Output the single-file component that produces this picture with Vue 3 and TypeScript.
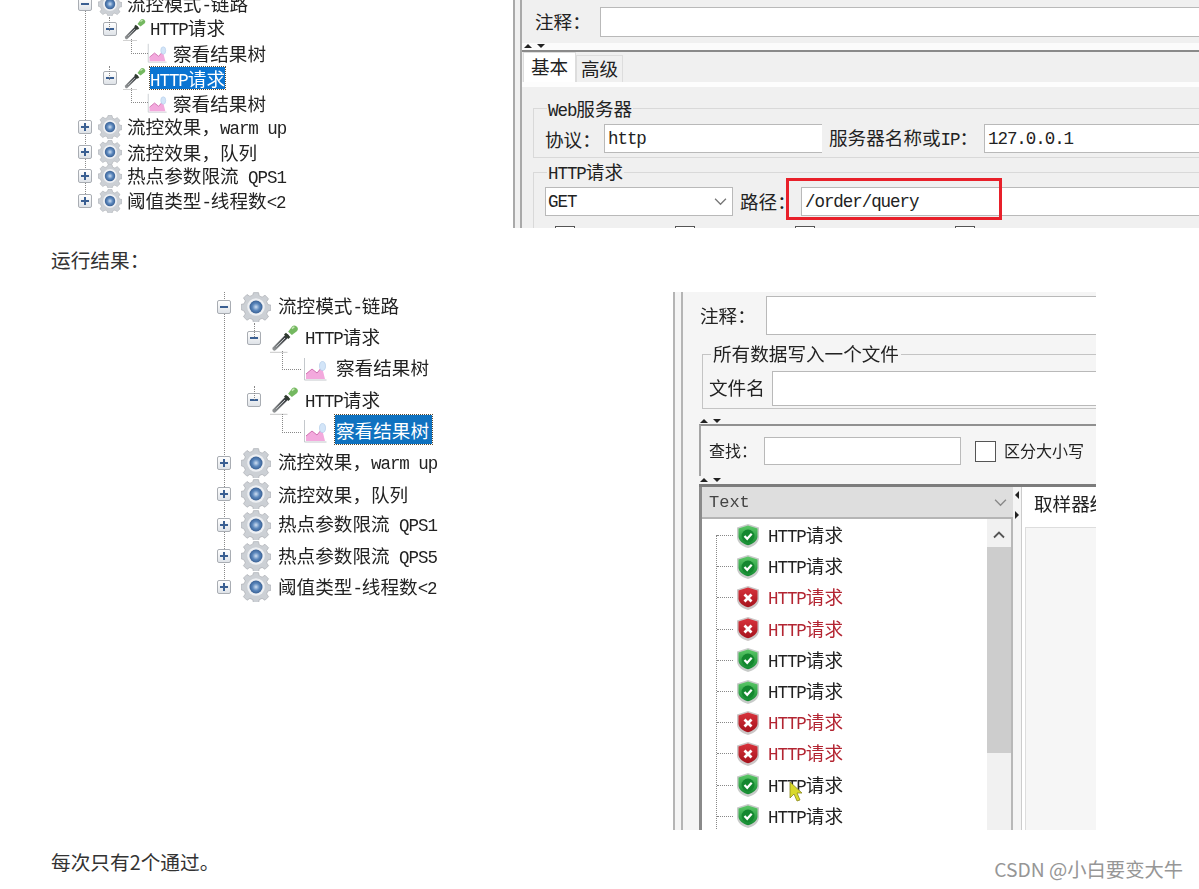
<script setup lang="ts">
interface Node { level: number; kind: 'gear' | 'pipette' | 'chart'; text: string; open?: boolean; sel?: boolean }
interface Seg { t: string; lat: boolean }

const seg = (s: string): Seg[] =>
  s.split(/([\x20-\x7e]+)/).filter(Boolean).map((t) => ({ t, lat: /^[\x20-\x7e]+$/.test(t) }))

const topTree: Node[] = [
  { level: 0, kind: 'gear', text: '流控模式-链路', open: true },
  { level: 1, kind: 'pipette', text: 'HTTP请求', open: true },
  { level: 2, kind: 'chart', text: '察看结果树' },
  { level: 1, kind: 'pipette', text: 'HTTP请求', open: true, sel: true },
  { level: 2, kind: 'chart', text: '察看结果树' },
  { level: 0, kind: 'gear', text: '流控效果\uFF0Cwarm up' },
  { level: 0, kind: 'gear', text: '流控效果\uFF0C队列' },
  { level: 0, kind: 'gear', text: '热点参数限流 QPS1' },
  { level: 0, kind: 'gear', text: '阈值类型-线程数<2' },
]
const bottomTree: Node[] = [
  { level: 0, kind: 'gear', text: '流控模式-链路', open: true },
  { level: 1, kind: 'pipette', text: 'HTTP请求', open: true },
  { level: 2, kind: 'chart', text: '察看结果树' },
  { level: 1, kind: 'pipette', text: 'HTTP请求', open: true },
  { level: 2, kind: 'chart', text: '察看结果树', sel: true },
  { level: 0, kind: 'gear', text: '流控效果\uFF0Cwarm up' },
  { level: 0, kind: 'gear', text: '流控效果\uFF0C队列' },
  { level: 0, kind: 'gear', text: '热点参数限流 QPS1' },
  { level: 0, kind: 'gear', text: '热点参数限流 QPS5' },
  { level: 0, kind: 'gear', text: '阈值类型-线程数<2' },
]
const trees = [
  { cls: 'tree-sm', nodes: topTree },
  { cls: 'tree-lg', nodes: bottomTree },
]
const results: boolean[] = [true, true, false, false, true, true, false, false, true, true]
</script>

<template>
  <div class="page">
    <svg class="defs" width="0" height="0" aria-hidden="true">
      <defs>
        <radialGradient id="hub" cx="0.5" cy="0.5" r="0.6">
          <stop offset="0" stop-color="#cfdff2" />
          <stop offset="0.45" stop-color="#5c88bd" />
          <stop offset="1" stop-color="#2a4f82" />
        </radialGradient>
        <linearGradient id="shG" x1="0" y1="0" x2="0" y2="1">
          <stop offset="0" stop-color="#5cc868" />
          <stop offset="1" stop-color="#128a30" />
        </linearGradient>
        <linearGradient id="shR" x1="0" y1="0" x2="0" y2="1">
          <stop offset="0" stop-color="#d8333c" />
          <stop offset="1" stop-color="#a5121c" />
        </linearGradient>
        <linearGradient id="stem" x1="0" y1="1" x2="1" y2="0">
          <stop offset="0" stop-color="#8d9092" />
          <stop offset="1" stop-color="#2f3336" />
        </linearGradient>
        <symbol id="gear" viewBox="0 0 24 24">
          <path fill="#ccd0d5" stroke="#adb0b5" stroke-width=".6" d="M10 .5h4l.6 2.600 2.300 1 2.300-1.500 2.800 2.800-1.500 2.300 1 2.300 2.500.6v4l-2.500.6-1 2.300 1.500 2.300-2.800 2.800-2.300-1.500-2.300 1-.6 2.600h-4l-.6-2.600-2.300-1-2.300 1.500-2.800-2.800 1.500-2.300-1-2.300L0 14v-4l2.500-.6 1-2.300L2 4.800l2.800-2.800 2.300 1.500 2.300-1z" />
          <circle cx="12" cy="12" r="7" fill="#eef0f3" />
          <circle cx="12" cy="12" r="5.200" fill="url(#hub)" />
        </symbol>
        <symbol id="pipette" viewBox="0 0 24 24">
          <path d="M3.500 20.500 L13.500 10.500" stroke="url(#stem)" stroke-width="3.200" stroke-linecap="round" />
          <path d="M5 19 L12 12" stroke="#c4c8ca" stroke-width=".8" />
          <path d="M12 8.500l3.500 3.500" stroke="#2f3b2f" stroke-width="2.200" />
          <path d="M14.500 7l3-4a2.600 2.600 0 0 1 4 3.500l-4 3z" fill="#74b860" />
          <path d="M17.500 4.500l2-1.500" stroke="#cbe8ba" stroke-width="1.200" />
          <path d="M0 23.500h14" stroke="#d2d2d2" stroke-width="1" />
        </symbol>
        <symbol id="chart" viewBox="0 0 24 24">
          <path d="M1.500 1v22h22" fill="none" stroke="#c4c8cc" stroke-width="1" />
          <path d="M3 22 L3 17 L9 12 L14 16 L19 10 L22 22z" fill="#f3a9dd" />
          <path d="M3 17 L9 12 L14 16 L19 10" fill="none" stroke="#cf6fb0" stroke-width="1" />
          <ellipse cx="19.500" cy="9" rx="3" ry="4.500" fill="#d3e5f8" stroke="#aac6e6" stroke-width=".6" />
        </symbol>
        <symbol id="okshield" viewBox="0 0 24 24">
          <path d="M12 0l11 3.500v9.500c0 6-5.500 9.500-11 11C6.500 22.500 1 19 1 13V3.500z" fill="#c8cbc9" />
          <path d="M12 1.500l9.500 3v8c0 4.500-4.700 7.300-9.500 8.800-4.800-1.500-9.500-4.300-9.500-8.800v-8z" fill="url(#shG)" />
          <circle cx="12" cy="12" r="6.500" fill="#14872f" />
          <path d="M8.500 12l2.700 2.800 4.500-5" fill="none" stroke="#fff" stroke-width="2.200" />
        </symbol>
        <symbol id="badshield" viewBox="0 0 24 24">
          <path d="M12 0l11 3.500v9.500c0 6-5.500 9.500-11 11C6.500 22.500 1 19 1 13V3.500z" fill="#cbc6c6" />
          <path d="M12 1.500l9.500 3v8c0 4.500-4.700 7.300-9.500 8.800-4.800-1.500-9.500-4.300-9.500-8.800v-8z" fill="url(#shR)" />
          <path d="M8.500 8.500l7 7m0-7l-7 7" fill="none" stroke="#fff" stroke-width="2.800" />
        </symbol>
      </defs>
    </svg>

    <template v-for="(tree, ti) in trees" :key="tree.cls">
      <div :class="ti === 0 ? 'shot shot-top' : 'shot shot-bottom'">
        <div class="tree" :class="tree.cls">
          <div v-for="(n, i) in tree.nodes" :key="i" class="row" :class="'lv' + n.level">
            <span v-if="n.level < 2" class="exp" :class="{ open: n.open }"></span>
            <svg class="ic" :class="'ic-' + n.kind"><use :href="'#' + n.kind" /></svg>
            <span class="label" :class="{ sel: n.sel }"><span v-for="(s, j) in seg(n.text)" :key="j" :class="{ lat: s.lat }">{{ s.t }}</span></span>
          </div>
        </div>

        <div v-if="ti === 0" class="jm jm-top">
          <div class="jm-inner">
            <div class="note">
              <span class="cn">注释&#xFF1A;</span>
              <div class="field grow"></div>
            </div>
            <div class="split"><i class="up"></i><i class="down"></i></div>
            <div class="tabs">
              <span class="tab on">基本</span>
              <span class="tab">高级</span>
            </div>
            <div class="tabbody">
              <fieldset class="group g1">
                <legend><span class="lat">Web</span>服务器</legend>
                <div class="frow">
                  <span class="proto-l">协议&#xFF1A;</span>
                  <div class="field f-proto"><span class="lat">http</span></div>
                  <span class="srv">服务器名称或<span class="lat">IP</span>&#xFF1A;</span>
                  <div class="field grow"><span class="lat">127.0.0.1</span></div>
                </div>
              </fieldset>
              <fieldset class="group g2">
                <legend><span class="lat">HTTP</span>请求</legend>
                <div class="frow">
                  <div class="field f-get">
                    <span class="lat">GET</span>
                    <svg class="chev" viewBox="0 0 12 8"><path d="M1 1.500l5 5 5-5" fill="none" stroke="#777" stroke-width="1.200" /></svg>
                  </div>
                  <span class="path">路径&#xFF1A;</span>
                  <div class="field grow path-field">
                    <span class="lat">/order/query</span>
                    <span class="redbox"></span>
                  </div>
                </div>
                <div class="checks"><i></i><i></i><i></i><i></i></div>
              </fieldset>
            </div>
          </div>
        </div>

        <div v-else class="jm jm-bottom">
          <div class="b-inner">
            <div class="b-note">
              <span>注释&#xFF1A;</span>
              <div class="field grow"></div>
            </div>
            <fieldset class="b-group">
              <legend>所有数据写入一个文件</legend>
              <div class="b-file">
                <span>文件名</span>
                <div class="field grow"></div>
              </div>
            </fieldset>
            <div class="split b-split"><i class="up"></i><i class="down"></i></div>
            <div class="b-search">
              <span>查找&#xFF1A;</span>
              <div class="field f-find"></div>
              <i class="cb"></i>
              <span class="case">区分大小写</span>
            </div>
            <div class="split b-split2"><i class="up"></i><i class="down"></i></div>
            <div class="b-results">
              <div class="list">
                <div class="combo">
                  <span class="lat combo-t">Text</span>
                  <svg class="chev" viewBox="0 0 12 8"><path d="M1 1.500l5 5 5-5" fill="none" stroke="#888" stroke-width="1.200" /></svg>
                </div>
                <div class="items">
                  <div class="rows">
                    <div v-for="(ok, i) in results" :key="i" class="res" :class="{ bad: !ok }">
                      <svg class="shield"><use :href="ok ? '#okshield' : '#badshield'" /></svg>
                      <span><span class="lat">HTTP</span>请求</span>
                    </div>
                  </div>
                  <div class="scroll">
                    <svg class="scroll-up" viewBox="0 0 12 8"><path d="M1 6.500l5-5 5 5" fill="none" stroke="#555" stroke-width="1.800" /></svg>
                    <div class="thumb"></div>
                  </div>
                </div>
              </div>
              <div class="vsplit"><i class="l"></i><i class="r"></i></div>
              <div class="detail">
                <div class="d-tab">取样器结果</div>
                <div class="d-body"></div>
              </div>
            </div>
            <svg class="cursor" viewBox="0 0 14 22"><path d="M1 1v16l4-4 3 7 3-1-3-7h5z" fill="#d9d92a" stroke="#8a8a20" stroke-width=".8" /></svg>
          </div>
        </div>
      </div>
      <p class="para" :class="ti === 0 ? 'p1' : 'p2'">{{ ti === 0 ? '运行结果\uFF1A' : '每次只有2个通过\u3002' }}</p>
    </template>

    <div class="watermark">CSDN @小白要变大牛</div>
  </div>
</template>

<style>
html, body { margin: 0; background: #fff; }
</style>

<style scoped>
.page {
  position: relative;
  width: 1199px;
  height: 889px;
  overflow: hidden;
  background: #fff;
  color: #222;
  font-family: "Noto Sans CJK SC", "Liberation Sans", sans-serif;
}
.defs { position: absolute; }
.lat { font-family: "Liberation Mono", monospace; font-size: 17.5px; letter-spacing: -1.05px; white-space: pre; }

.shot { display: flex; overflow: hidden; filter: blur(0.3px); }
.shot-top { height: 228px; padding-left: 78px; }
.shot-bottom { height: 538px; padding-left: 217px; }

.para { margin: 0 0 0 51px; font-size: 19.7px; line-height: 28px; color: #333; }
.p1 { margin-top: 18px; margin-bottom: 18px; }
.p2 { margin-top: 18px; }

/* trees */
.tree { position: relative; font-size: 18.6px; flex: none; }
.tree::before {
  content: "";
  position: absolute;
  border-left: 1px dotted #888;
  left: 7px;
}
.row { position: relative; display: flex; align-items: center; white-space: pre; }
.ic { flex: none; display: block; }
.label { display: block; line-height: 24px; }
.label.sel { background: #0a74d2; color: #fff; outline: 1px dotted #5a4a30; }
.exp {
  position: relative;
  flex: none;
  box-sizing: border-box;
  width: 14px;
  height: 14px;
  border: 1px solid #a9adb3;
  border-radius: 2px;
  background: linear-gradient(#fff, #dfe3e8);
}
.exp::before {
  content: "";
  position: absolute;
  left: 2px;
  right: 2px;
  top: 5px;
  height: 2px;
  background: #3a5f92;
}
.exp:not(.open)::after {
  content: "";
  position: absolute;
  top: 2px;
  bottom: 2px;
  left: 5px;
  width: 2px;
  background: #3a5f92;
}
.row.lv2::before {
  content: "";
  position: absolute;
  border-left: 1px dotted #888;
}
.row.lv2::after {
  content: "";
  position: absolute;
  border-left: 1px dotted #888;
  border-bottom: 1px dotted #888;
}

.tree-sm { margin-top: -8px; width: 435px; }
.tree-sm::before { top: 0; height: 210px; }
.tree-sm .row { height: 24.6px; }
.tree-sm .ic { width: 24px; height: 24px; }
.tree-sm .lv0 .ic { margin-left: 6px; margin-right: 5px; }
.tree-sm .lv1 { padding-left: 25px; }
.tree-sm .lv1 .ic { margin-left: 6px; margin-right: 3px; }
.tree-sm .lv2 { padding-left: 69px; }
.tree-sm .lv2 .ic { width: 20px; height: 20px; margin-right: 6px; }
.tree-sm .label.sel { line-height: 22px; height: 22px; }
.tree-sm .row.lv2::before { left: 31px; top: -24px; height: 14px; }
.tree-sm .row.lv2::after { left: 53px; top: -2px; width: 16px; height: 14px; }

.tree-lg { width: 456px; }
.tree-lg::before { top: 0; height: 295px; }
.tree-lg .row { height: 31.2px; top: -1px; }
.tree-lg .ic { width: 30px; height: 30px; }
.tree-lg .lv0 .ic { margin-left: 10px; margin-right: 7px; }
.tree-lg .lv1 { padding-left: 30px; }
.tree-lg .lv1 .ic { margin-left: 9px; margin-right: 5px; }
.tree-lg .lv2 { padding-left: 86px; }
.tree-lg .lv2 .ic { width: 24px; height: 24px; margin-right: 9px; }
.tree-lg .lv2 .label { margin-bottom: 3px; }
.tree-lg .label.sel { line-height: 29px; height: 29px; padding: 0 3px 0 1px; margin-left: -1px; background: #0f72c0; }
.tree-lg .row.lv2::before { left: 37px; top: -30px; height: 14px; }
.tree-lg .row.lv2::after { left: 65px; top: -2px; width: 18px; height: 18px; }

/* shared JMeter bits */
.jm { font-size: 18.6px; color: #222; background: #f0f0f0; line-height: 24px; }
.grow { flex: 1; min-width: 0; }
.field {
  box-sizing: border-box;
  background: #fff;
  border: 1px solid #b9b9b9;
  border-right: 0;
  display: flex;
  align-items: center;
  padding-left: 3px;
}
.chev { width: 13px; height: 9px; flex: none; }
.split { position: relative; display: flex; gap: 5px; align-items: flex-end; }
.split i { width: 0; height: 0; border-left: 4px solid transparent; border-right: 4px solid transparent; }
.split .up { border-bottom: 4px solid #222; }
.split .down { border-top: 4px solid #222; }

/* top panel */
.jm-top {
  width: 686px;
  flex: none;
  box-sizing: border-box;
  border-left: 2px solid #a9a9a9;
  padding-left: 5px;
}
.jm-inner { height: 228px; border-left: 2px solid #a9a9a9; overflow: hidden; }
.note { display: flex; align-items: center; height: 30px; padding-top: 7px; padding-left: 13px; }
.cn { width: 65px; flex: none; margin-bottom: 3px; }
.note .field { height: 30px; }
.jm-top .split { height: 15px; padding-left: 2px; background: linear-gradient(#f0f0f0 6px, #fbfbfb 6px); border-bottom: 2px solid #8a8a8a; box-sizing: border-box; }
.jm-top .split i { margin-bottom: 2px; }
.tabs { display: flex; align-items: flex-end; height: 30px; padding-left: 1px; box-sizing: border-box; }
.tab {
  box-sizing: border-box;
  width: 47px;
  height: 27px;
  text-align: center;
  line-height: 24px;
  white-space: nowrap;
  border: 1px solid #ddd;
  border-bottom: 0;
  background: #f0f0f0;
}
.tab.on { width: 53px; height: 30px; background: #fff; line-height: 25px; }
.tabbody { border-top: 5px solid #fdfdfd; padding: 11px 0 0 11px; }
.group { margin: 0; padding: 0; border: 1px solid #d9d9d9; border-right: 0; box-sizing: border-box; min-width: 0; }
.group legend { padding: 0 1px; margin-left: 13px; line-height: 20px; height: 20px; }
.g1 { height: 60px; margin-bottom: 4px; }
.g2 { height: 90px; }
.g2 legend { line-height: 18px; }
.frow { display: flex; align-items: center; height: 29px; padding-left: 11px; }
.g1 .frow { margin-top: 6px; }
.g2 .frow { margin-top: 5px; }
.proto-l { width: 59px; flex: none; white-space: nowrap; }
.f-proto { width: 218px; flex: none; height: 29px; }
.srv { width: 155px; flex: none; margin-left: 7px; white-space: nowrap; }
.g1 .grow { height: 29px; }
.f-get { width: 188px; flex: none; height: 29px; justify-content: space-between; padding: 0 5px 0 2px; border-right: 1px solid #b9b9b9; }
.path { width: 61px; flex: none; margin-left: 7px; margin-bottom: 2px; white-space: nowrap; }
.path-field { position: relative; height: 29px; }
.redbox {
  position: absolute;
  left: -16px;
  top: -10px;
  width: 216px;
  height: 42px;
  box-sizing: border-box;
  border: 3px solid #e8202a;
}
.checks { display: flex; padding-left: 21px; margin-top: 10px; }
.checks i { width: 20px; height: 20px; box-sizing: border-box; border: 1px solid #555; background: #fff; margin-right: 100px; flex: none; }
.checks i:nth-child(3) { margin-right: 140px; }

/* bottom panel */
.jm-bottom {
  position: relative;
  width: 423px;
  flex: none;
  box-sizing: border-box;
  border-left: 2px solid #b5b5b5;
  padding-left: 6px;
  background: #f5f5f5;
}
.b-inner { position: relative; height: 538px; border-left: 2px solid #b5b5b5; background: #f5f5f5; overflow: hidden; }
.b-note { display: flex; align-items: center; height: 39px; padding-top: 4px; padding-left: 17px; }
.b-note span { width: 66px; flex: none; white-space: nowrap; margin-bottom: 2px; }
.b-note .field { height: 39px; }
.b-group { margin: 9px 0 0 19px; padding: 0; height: 65px; border: 1px solid #c4c4c4; border-right: 0; box-sizing: border-box; min-width: 0; }
.b-group legend { padding: 0 2px; margin-left: 8px; line-height: 18px; height: 20px; white-space: nowrap; }
.b-file { display: flex; align-items: center; margin-top: 7px; padding-left: 6px; }
.b-file span { width: 63px; flex: none; white-space: nowrap; margin-bottom: 4px; }
.b-file .field { height: 35px; }
.b-split { height: 15px; padding-left: 17px; }
.b-split i { margin-bottom: 1px; }
.b-split2 { height: 8px; padding-left: 17px; align-items: center; }
.b-search {
  display: flex;
  align-items: center;
  height: 52px;
  margin-left: 16px;
  padding-left: 8px;
  border-top: 2px solid #909090;
  border-left: 2px solid #a5a5a5;
  box-sizing: border-box;
  font-size: 16px;
}
.b-search span { margin-bottom: 3px; }
.b-search span:first-child { width: 55px; flex: none; white-space: nowrap; }
.f-find { width: 197px; flex: none; height: 28px; border-right: 1px solid #bbb; }
.cb { width: 21px; height: 21px; flex: none; box-sizing: border-box; border: 1px solid #555; background: #fff; margin: 0 8px 0 14px; }
.case { white-space: nowrap; }
.b-results {
  display: flex;
  height: 346px;
  margin-left: 16px;
  border-top: 3px solid #7c7c7c;
}
.list { width: 314px; flex: none; box-sizing: border-box; border-left: 3px solid #8a8a8a; display: flex; flex-direction: column; }
.combo {
  height: 32px;
  flex: none;
  box-sizing: border-box;
  background: #dedede;
  border-bottom: 2px solid #b5b5b5;
  display: flex;
  align-items: center;
  justify-content: space-between;
  padding: 0 6px 0 7px;
}
.combo-t { letter-spacing: 0; color: #444; font-size: 17px; margin-top: 2px; }
.items { flex: 1; display: flex; background: #fff; overflow: hidden; border-right: 2px solid #b8b8b8; }
.rows { flex: 1; position: relative; padding-top: 1px; }
.rows::before { content: ""; position: absolute; left: 14px; top: 16px; bottom: 0; border-left: 1px dotted #888; }
.res { position: relative; display: flex; align-items: center; height: 31.2px; padding-left: 34px; white-space: pre; }
.res::before { content: ""; position: absolute; left: 15px; width: 16px; top: 15px; border-top: 1px dotted #888; }
.res.bad { color: #b32532; }
.shield { width: 24px; height: 24px; margin-right: 8px; flex: none; }
.scroll { width: 24px; flex: none; background: #f1f1f1; }
.scroll-up { display: block; width: 12px; height: 8px; margin: 12px auto 8px; }
.thumb { height: 206px; background: #cdcdcd; }
.vsplit { width: 9px; flex: none; display: flex; flex-direction: column; gap: 12px; align-items: center; padding-top: 4px; box-sizing: border-box; border-right: 1px solid #ccc; }
.vsplit i { width: 0; height: 0; border-top: 4px solid transparent; border-bottom: 4px solid transparent; }
.vsplit .l { border-right: 4px solid #222; }
.vsplit .r { border-left: 4px solid #222; }
.detail { flex: 1; min-width: 0; overflow: hidden; background: #fff; display: flex; flex-direction: column; }
.d-tab { height: 40px; flex: none; padding-left: 12px; line-height: 32px; white-space: nowrap; }
.d-body { flex: 1; margin-left: 3px; background: #f6f6f6; border-left: 1px solid #ddd; border-top: 1px solid #ddd; }
.cursor { position: absolute; left: 106px; top: 489px; width: 14px; height: 22px; }

.watermark {
  position: absolute;
  right: 16px;
  top: 855px;
  font-size: 19.3px;
  line-height: 28px;
  color: #969696;
  white-space: nowrap;
}
</style>
